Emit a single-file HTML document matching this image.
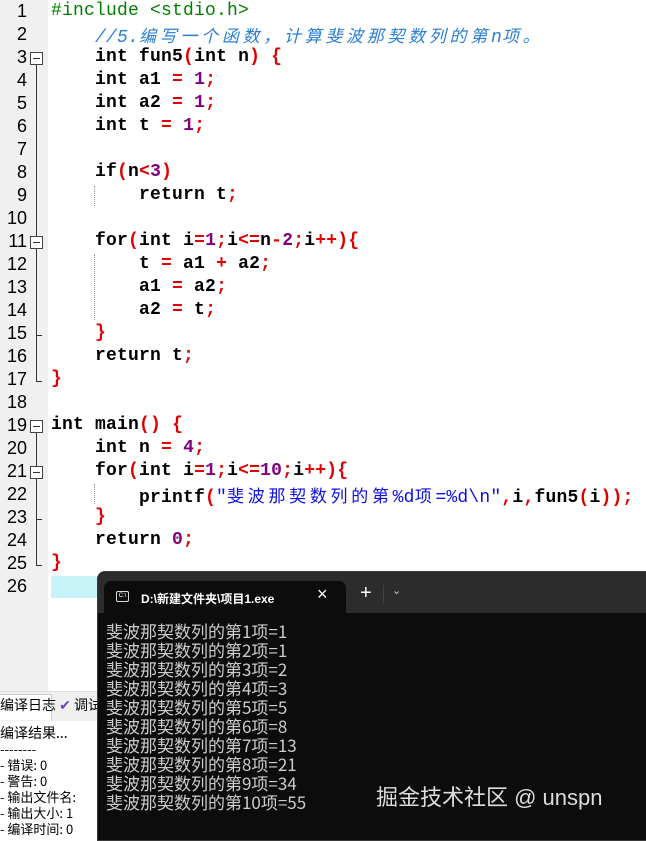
<!DOCTYPE html>
<html><head><meta charset="utf-8"><style>
*{margin:0;padding:0;box-sizing:border-box}
body{width:646px;height:832px;overflow:hidden;background:#fff;position:relative;font-family:"Liberation Mono","Noto Sans CJK SC",monospace}
#gut{position:absolute;left:0;top:0;width:48px;height:691px;background:#f0f0f0}
.ln{position:absolute;left:0;width:27px;text-align:right;font-size:18px;line-height:23px;color:#000;font-family:"Liberation Sans",sans-serif}
.cl{position:absolute;left:51px;font-size:18px;line-height:23px;white-space:pre;letter-spacing:0.2px;color:#000;font-weight:bold}
.k{font-weight:bold}
.o{color:#e00000;font-weight:bold}
.n{color:#800080}
.s{color:#1010e0;font-weight:normal}
.c{color:#2a7fd4;font-style:italic;font-weight:normal}
.g{color:#008000;font-weight:normal}
.cj{letter-spacing:3.7px;font-family:"Noto Sans CJK SC",sans-serif;font-size:17px}
.box{position:absolute;left:30px;width:13px;height:13px;border:1px solid #444;background:#fff}
.box:after{content:"";position:absolute;left:2px;top:5px;width:7px;height:1px;background:#333}
.vl{position:absolute;left:36px;width:1px;background:#333}
.end{position:absolute;left:36px;width:6px;height:1px;background:#333}
.dot{position:absolute;width:0;border-left:1px dotted #999}
#term{position:absolute;left:97px;top:571px;width:560px;height:270px;background:#0c0c0c;border:1px solid #3a3a3a;border-radius:8px 0 0 0}
#bar{position:absolute;left:0;top:0;right:0;height:41px;background:#2c2c2c;border-radius:8px 0 0 0}
#tab{position:absolute;left:6px;top:9px;width:242px;height:33px;background:#0c0c0c;border-radius:7px 7px 0 0;color:#fff;font-family:"Liberation Sans","Noto Sans CJK SC",sans-serif;font-size:12px;font-weight:bold}
.out{position:absolute;left:8px;color:#ccc;font-family:"Noto Sans CJK SC",sans-serif;font-size:17px;line-height:19px;white-space:pre}
.bt{position:absolute;left:0;font-family:"Noto Sans CJK SC",sans-serif;font-size:13px;line-height:16px;color:#000;white-space:pre}
</style></head><body>
<div id="gut"></div>
<div style="position:absolute;left:51px;top:576px;width:600px;height:22px;background:#c8f4f8"></div>

<div class="ln" style="top:0">1</div><div class="ln" style="top:23px">2</div><div class="ln" style="top:46px">3</div><div class="ln" style="top:69px">4</div><div class="ln" style="top:92px">5</div><div class="ln" style="top:115px">6</div><div class="ln" style="top:138px">7</div><div class="ln" style="top:161px">8</div><div class="ln" style="top:184px">9</div><div class="ln" style="top:207px">10</div><div class="ln" style="top:230px">11</div><div class="ln" style="top:253px">12</div><div class="ln" style="top:276px">13</div><div class="ln" style="top:299px">14</div><div class="ln" style="top:322px">15</div><div class="ln" style="top:345px">16</div><div class="ln" style="top:368px">17</div><div class="ln" style="top:391px">18</div><div class="ln" style="top:414px">19</div><div class="ln" style="top:437px">20</div><div class="ln" style="top:460px">21</div><div class="ln" style="top:483px">22</div><div class="ln" style="top:506px">23</div><div class="ln" style="top:529px">24</div><div class="ln" style="top:552px">25</div><div class="ln" style="top:575px">26</div>

<div class="vl" style="top:64px;height:318px"></div>
<div class="end" style="top:381px"></div>
<div class="end" style="top:335px"></div>
<div class="box" style="top:52px"></div>
<div class="box" style="top:236px"></div>
<div class="vl" style="top:432px;height:134px"></div>
<div class="end" style="top:565px"></div>
<div class="end" style="top:519px"></div>
<div class="box" style="top:420px"></div>
<div class="box" style="top:466px"></div>

<div class="dot" style="left:94px;top:186px;height:20px"></div>
<div class="dot" style="left:94px;top:254px;height:66px"></div>
<div class="dot" style="left:94px;top:484px;height:20px"></div>

<div class="cl" style="top:0"><span class="g">#include &lt;stdio.h&gt;</span></div>
<div class="cl" style="top:23px">    <span class="c">//5.<span class="cj">编写一个函数，计算斐波那契数列的第</span>n<span class="cj">项。</span></span></div>
<div class="cl" style="top:46px">    <span class="k">int</span> fun5<span class="o">(</span><span class="k">int</span> n<span class="o">)</span> <span class="o">{</span></div>
<div class="cl" style="top:69px">    <span class="k">int</span> a1 <span class="o">=</span> <span class="n">1</span><span class="o">;</span></div>
<div class="cl" style="top:92px">    <span class="k">int</span> a2 <span class="o">=</span> <span class="n">1</span><span class="o">;</span></div>
<div class="cl" style="top:115px">    <span class="k">int</span> t <span class="o">=</span> <span class="n">1</span><span class="o">;</span></div>
<div class="cl" style="top:161px">    <span class="k">if</span><span class="o">(</span>n<span class="o">&lt;</span><span class="n">3</span><span class="o">)</span></div>
<div class="cl" style="top:184px">        <span class="k">return</span> t<span class="o">;</span></div>
<div class="cl" style="top:230px">    <span class="k">for</span><span class="o">(</span><span class="k">int</span> i<span class="o">=</span><span class="n">1</span><span class="o">;</span>i<span class="o">&lt;=</span>n<span class="o">-</span><span class="n">2</span><span class="o">;</span>i<span class="o">++){</span></div>
<div class="cl" style="top:253px">        t <span class="o">=</span> a1 <span class="o">+</span> a2<span class="o">;</span></div>
<div class="cl" style="top:276px">        a1 <span class="o">=</span> a2<span class="o">;</span></div>
<div class="cl" style="top:299px">        a2 <span class="o">=</span> t<span class="o">;</span></div>
<div class="cl" style="top:322px">    <span class="o">}</span></div>
<div class="cl" style="top:345px">    <span class="k">return</span> t<span class="o">;</span></div>
<div class="cl" style="top:368px"><span class="o">}</span></div>
<div class="cl" style="top:414px"><span class="k">int</span> main<span class="o">()</span> <span class="o">{</span></div>
<div class="cl" style="top:437px">    <span class="k">int</span> n <span class="o">=</span> <span class="n">4</span><span class="o">;</span></div>
<div class="cl" style="top:460px">    <span class="k">for</span><span class="o">(</span><span class="k">int</span> i<span class="o">=</span><span class="n">1</span><span class="o">;</span>i<span class="o">&lt;=</span><span class="n">10</span><span class="o">;</span>i<span class="o">++){</span></div>
<div class="cl" style="top:483px">        printf<span class="o">(</span><span class="s">"<span class="cj">斐波那契数列的第</span>%d<span class="cj">项</span>=%d\n"</span><span class="o">,</span>i<span class="o">,</span>fun5<span class="o">(</span>i<span class="o">));</span></div>
<div class="cl" style="top:506px">    <span class="o">}</span></div>
<div class="cl" style="top:529px">    <span class="k">return</span> <span class="n">0</span><span class="o">;</span></div>
<div class="cl" style="top:552px"><span class="o">}</span></div>

<div style="position:absolute;left:0;top:691px;width:100px;height:30px;background:#f0f0f0;border-top:1px solid #ddd"></div>
<div style="position:absolute;left:-2px;top:694px;width:54px;height:26px;background:#fff;border:1px solid #ccc;border-bottom:none"></div>
<div class="bt" style="top:697px;font-size:14px">编译日志 <span style="color:#7040c0">✔</span> 调试</div>
<div class="bt" style="top:725px;font-size:14px">编译结果...</div>
<div class="bt" style="top:741px">--------</div>
<div class="bt" style="top:757px">- 错误: 0</div>
<div class="bt" style="top:773px">- 警告: 0</div>
<div class="bt" style="top:789px">- 输出文件名:</div>
<div class="bt" style="top:805px">- 输出大小: 1</div>
<div class="bt" style="top:821px">- 编译时间: 0</div>

<div id="term">
 <div id="bar"></div>
 <div id="tab">
  <div style="position:absolute;left:12px;top:10px;width:13px;height:11px;border:1px solid #ddd;border-radius:2px;font-size:6px;line-height:9px;text-align:center;font-weight:normal">C:\</div>
  <div style="position:absolute;left:37px;top:9px">D:\新建文件夹\项目1.exe</div>
  <div style="position:absolute;left:213px;top:3px;font-size:18px;font-weight:normal">×</div>
 </div>
 <div style="position:absolute;left:262px;top:9px;color:#fff;font-family:'Liberation Sans';font-size:20px;line-height:24px">+</div>
 <div style="position:absolute;left:285px;top:13px;width:1px;height:18px;background:#444"></div>
 <div style="position:absolute;left:294px;top:12px;color:#ccc;font-family:'Liberation Sans';font-size:11px">⌄</div>
 <div class="out" style="top:49px">斐波那契数列的第1项=1</div>
 <div class="out" style="top:68px">斐波那契数列的第2项=1</div>
 <div class="out" style="top:87px">斐波那契数列的第3项=2</div>
 <div class="out" style="top:106px">斐波那契数列的第4项=3</div>
 <div class="out" style="top:125px">斐波那契数列的第5项=5</div>
 <div class="out" style="top:144px">斐波那契数列的第6项=8</div>
 <div class="out" style="top:163px">斐波那契数列的第7项=13</div>
 <div class="out" style="top:182px">斐波那契数列的第8项=21</div>
 <div class="out" style="top:201px">斐波那契数列的第9项=34</div>
 <div class="out" style="top:220px">斐波那契数列的第10项=55</div>
 <div style="position:absolute;left:278px;top:208px;color:#ddd;font-family:'Liberation Sans','Noto Sans CJK SC',sans-serif;font-size:22px;white-space:pre">掘金技术社区 @ unspn</div>
</div>
</body></html>
